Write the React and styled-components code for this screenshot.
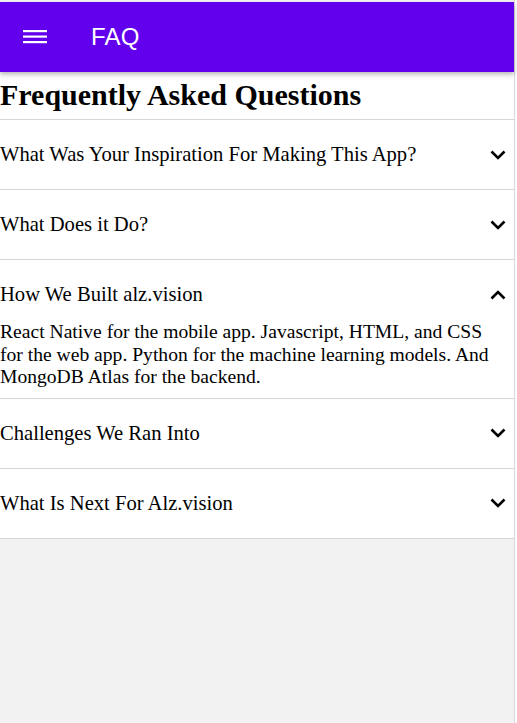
import React, { useState } from "react";
import styled, { createGlobalStyle } from "styled-components";

const Global = createGlobalStyle`
  html, body { margin: 0; padding: 0; background: #ffffff; }
  body { font-family: "Liberation Serif", "Times New Roman", serif; }
`;

const Page = styled.div`
  width: 515px;
  min-height: 723px;
  background: #f2f2f2;
  border-right: 1px solid #d9d9d9;
  box-sizing: border-box;
  padding-top: 2px;
  display: flex;
  flex-direction: column;
`;

const TopBar = styled.header`
  height: 70px;
  background: #6200ee;
  display: flex;
  align-items: center;
  padding-left: 23px;
  gap: 20px;
  box-shadow: 0 2px 4px rgba(0, 0, 0, 0.22), 0 4px 6px rgba(0, 0, 0, 0.08);
  position: relative;
  z-index: 1;
`;

const MenuButton = styled.button`
  width: 48px;
  height: 48px;
  padding: 0;
  border: 0;
  background: transparent;
  display: flex;
  align-items: center;
  justify-content: flex-start;
  cursor: pointer;
`;

const BarTitle = styled.h1`
  margin: 0;
  font-family: "Liberation Sans", Arial, sans-serif;
  font-weight: 400;
  font-size: 24px;
  color: #ffffff;
  letter-spacing: 0.2px;
`;

const Content = styled.main`
  background: #ffffff;
`;

const Heading = styled.h2`
  margin: 0;
  padding: 7px 0 8px;
  font-size: 30px;
  font-weight: 700;
  line-height: 32px;
  color: #000;
  border-bottom: 1px solid #d6d6d6;
`;

const Item = styled.section`
  border-bottom: 1px solid #d6d6d6;
`;

const Summary = styled.button`
  width: 100%;
  border: 0;
  background: transparent;
  display: flex;
  align-items: center;
  justify-content: space-between;
  padding: ${(p) => (p.$open ? "24px 8px 16px 0" : "24px 8px 24px 0")};
  font-family: "Liberation Serif", "Times New Roman", serif;
  font-size: 20.6px;
  line-height: 21px;
  color: #000;
  text-align: left;
  cursor: pointer;
`;

const Answer = styled.p`
  margin: 0;
  padding: 0 0 9px;
  font-size: 19.6px;
  line-height: 22.5px;
  color: #000;
  white-space: pre-line;
`;

const Chevron = ({ up }) => (
  <svg width="16" height="10" viewBox="0 0 16 10" aria-hidden="true">
    <polyline
      points={up ? "1.5,8.5 8,2 14.5,8.5" : "1.5,1.5 8,8 14.5,1.5"}
      fill="none"
      stroke="#000"
      strokeWidth="2.6"
    />
  </svg>
);

const MenuIcon = () => (
  <svg width="24" height="14" viewBox="0 0 24 14" aria-hidden="true">
    <rect x="0" y="0" width="24" height="2.2" fill="#fff" />
    <rect x="0" y="5.5" width="24" height="2.2" fill="#fff" />
    <rect x="0" y="11" width="24" height="2.2" fill="#fff" />
  </svg>
);

const faqs = [
  { q: "What Was Your Inspiration For Making This App?", a: "" },
  { q: "What Does it Do?", a: "" },
  {
    q: "How We Built alz.vision",
    a: "React Native for the mobile app. Javascript, HTML, and CSS\nfor the web app. Python for the machine learning models. And\nMongoDB Atlas for the backend.",
  },
  { q: "Challenges We Ran Into", a: "" },
  { q: "What Is Next For Alz.vision", a: "" },
];

export default function App() {
  const [open, setOpen] = useState(2);
  return (
    <>
      <Global />
      <Page>
        <TopBar>
          <MenuButton aria-label="menu">
            <MenuIcon />
          </MenuButton>
          <BarTitle>FAQ</BarTitle>
        </TopBar>
        <Content>
          <Heading>Frequently Asked Questions</Heading>
          {faqs.map((f, i) => (
            <Item key={f.q}>
              <Summary $open={open === i} onClick={() => setOpen(open === i ? -1 : i)}>
                <span>{f.q}</span>
                <Chevron up={open === i} />
              </Summary>
              {open === i && <Answer>{f.a}</Answer>}
            </Item>
          ))}
        </Content>
      </Page>
    </>
  );
}
